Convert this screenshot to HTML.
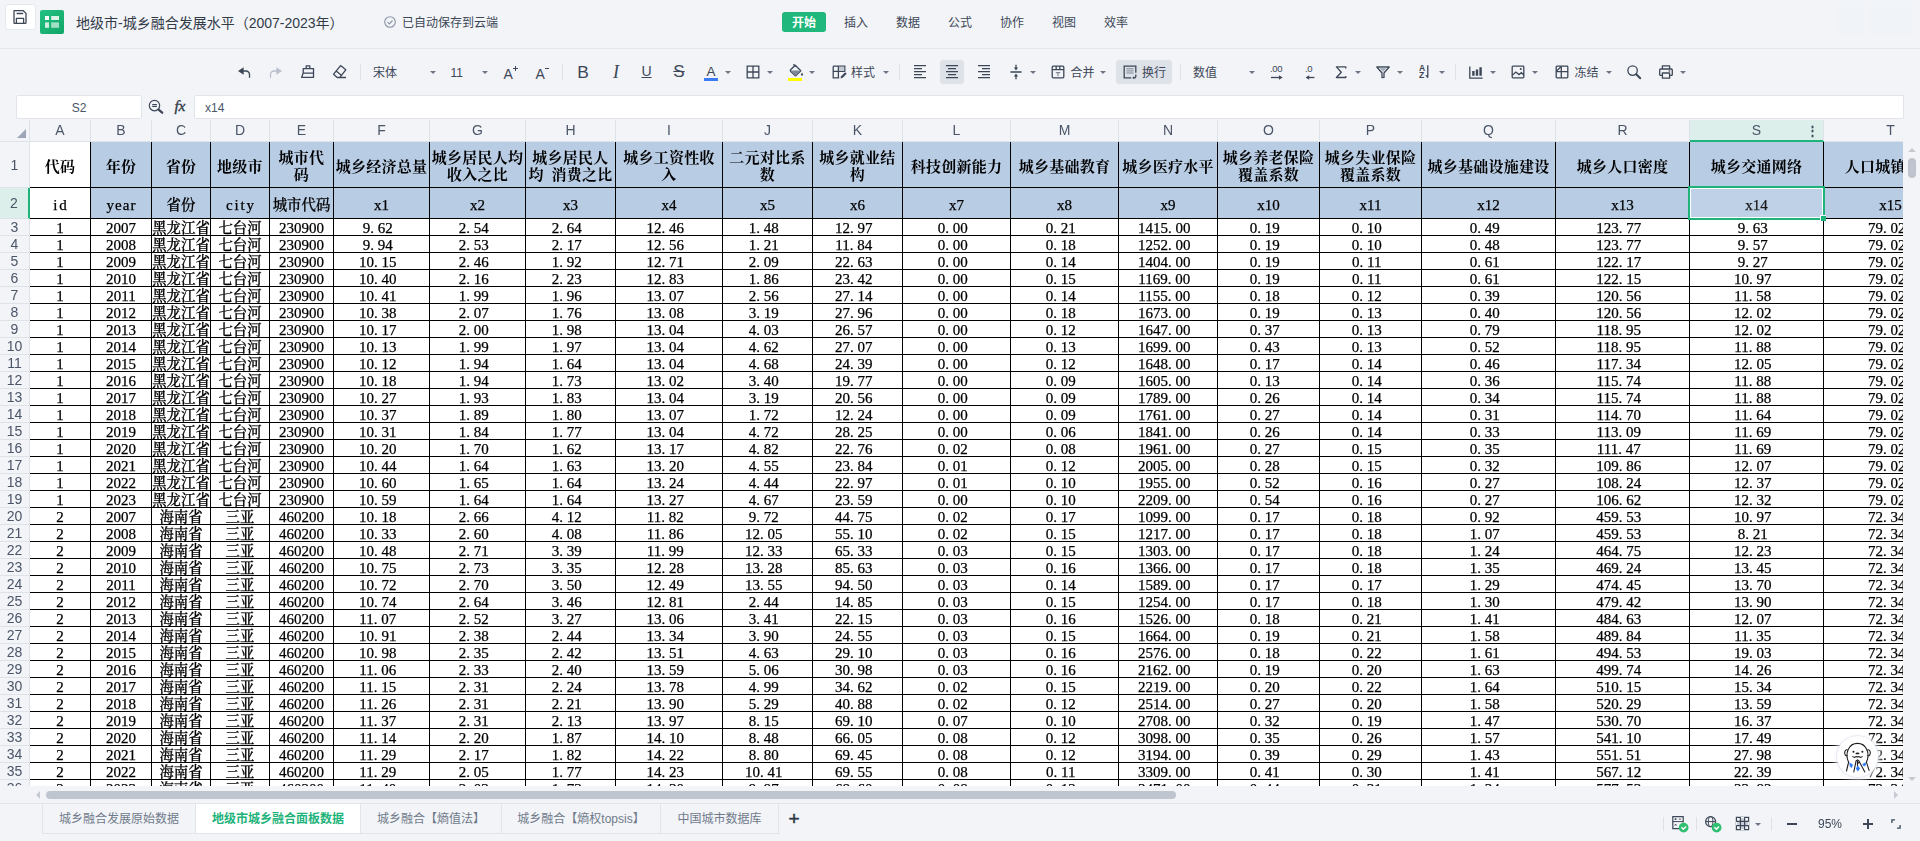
<!DOCTYPE html>
<html lang="zh-CN"><head><meta charset="utf-8"><title>地级市-城乡融合发展水平（2007-2023年）</title>
<style>
*{box-sizing:border-box;margin:0;padding:0}
html,body{width:1920px;height:841px;overflow:hidden;background:#f2f4f8}
body{position:relative;font-family:"Liberation Sans","Noto Sans CJK SC",sans-serif;font-size:13px;color:#3d4757}
#grid{will-change:transform;position:absolute;left:0;top:119px;width:1903px;height:667px;overflow:hidden;background:#fff}
.chr{display:flex;height:23px;width:2200px;background:#f2f4f8;border-bottom:1px solid #dde1e8;border-top:1px solid #f2f4f8}
.corner{width:30px;height:21px;border-right:1px solid #dde1e8;position:relative;flex:none}
.corner i{position:absolute;left:17px;top:9px;width:0;height:0;border-left:9px solid transparent;border-bottom:9px solid #9aa5b5}
.ch{flex:none;height:21px;border-right:1px solid #dde1e8;text-align:center;line-height:21px;font-size:14px;color:#4a5567;position:relative}
.ch.sel{background:#dcefea;box-shadow:0 1px 0 #1db37a,inset 0 -1px 0 #1db37a}
.ch b{position:absolute;right:4.5px;top:.5px;font-weight:bold;font-size:12.5px;color:#3d4757}
.r{display:flex;width:2200px}
.rh{flex:none;width:30px;border-right:1px solid #dde1e8;border-bottom:1px solid #dde1e8;background:#f2f4f8;text-align:center;font-size:14px;color:#4a5567;display:flex;align-items:center;justify-content:center}
.rh.sel{background:#dcefea;border-right:2px solid #1db37a}
.c{flex:none;border-right:1px solid #000;border-bottom:1px solid #000;font-family:"Liberation Serif","Noto Serif CJK SC",serif;font-size:15px;color:#000;text-align:center;white-space:nowrap;overflow:hidden;line-height:18px;height:100%}
.c i{font-style:normal;letter-spacing:3.75px}
.c.hb,.c.h2{background:#b8cce4;display:flex;align-items:center;justify-content:center}
.c.hb{font-weight:bold;line-height:17px;padding:5px 2px 0;word-spacing:3.75px;letter-spacing:.25px;-webkit-text-stroke:0}
.c.w{background:#fff}
.c.h2{align-items:flex-end;padding-bottom:4px}
.c.n{padding-right:7.5px}
.c.k{font-size:14.4px;font-weight:500}
.c{-webkit-text-stroke:.25px #000}
.ls1 span{letter-spacing:1px;margin-right:-1px}.ls2 span{letter-spacing:1.8px;margin-right:-1.8px}
.selbox{position:absolute;left:1688px;top:67px;width:137px;height:34px;border:2px solid #1db37a;box-shadow:inset 0 0 0 1px #fff;background:rgba(255,255,255,.1)}
.selbox i{position:absolute;right:-3px;bottom:-3px;width:6px;height:6px;background:#1db37a;border-left:1px solid #fff;border-top:1px solid #fff}
#title{position:absolute;left:0;top:0;width:1920px;height:49px;border-bottom:1px solid #e4e7ed}
.savebtn{position:absolute;left:5px;top:4px;width:31px;height:26px;background:#fff;border:1px solid #e6e9ee;border-radius:3px}
.savebtn svg{position:absolute;left:6px;top:4px;width:16px;height:16px}
.appic{position:absolute;left:40px;top:10px;width:24px;height:24px;border-radius:2px;background:linear-gradient(135deg,#22c283,#11a566)}
.doct{position:absolute;left:76px;top:12px;font-size:14px;line-height:22px;color:#333b48;white-space:nowrap}
.saved{position:absolute;left:402px;top:12px;font-size:12px;line-height:22px;color:#3d4757;white-space:nowrap}
.menu b{position:absolute;left:782px;top:12px;width:44px;height:20px;border-radius:3px;background:#1fb77b;color:#fff;font-size:12px;line-height:22px;text-align:center;font-weight:bold}
.menu span{position:absolute;top:12px;font-size:12px;line-height:22px;color:#3d4757;white-space:nowrap}
.ic{position:absolute;width:16px;height:16px;overflow:visible}
.cr{position:absolute;width:0;height:0;border-left:3px solid transparent;border-right:3px solid transparent;border-top:3.2px solid #6d7686}
.sp{position:absolute;width:1px;background:#dde1e8}
.t{position:absolute;font-size:12px;line-height:20px;color:#3d4757;white-space:nowrap}
.big{position:absolute;font-size:15.5px;line-height:20px;color:#3d4757;white-space:nowrap}
.big sup{font-size:9px;position:relative;top:-3px;left:-1.5px;vertical-align:top;line-height:10px}
.bar{position:absolute;top:78px;width:14px;height:3px}
.act{position:absolute;background:#dde1e8;border-radius:3px}
.dec{position:absolute;top:63px;font-size:9.5px;line-height:12px;color:#3d4757;letter-spacing:-.3px}
.az{position:absolute;font-size:8.5px;line-height:9px;color:#3d4757;font-weight:bold}
#fb .nm{position:absolute;left:16px;top:95px;width:126px;height:24px;background:#fff;border:1px solid #e1e5eb;border-radius:2px;text-align:center;font-size:12px;line-height:24.5px;color:#4a5567}
#fb .fx{position:absolute;left:174.5px;top:95.5px;font-family:"Liberation Serif",serif;font-style:italic;font-weight:normal;-webkit-text-stroke:.35px #2f3846;font-size:15.5px;line-height:20px;color:#2f3846;letter-spacing:-.3px}
#fb .fx small{font-size:10px;font-weight:normal}
#fb .fi{position:absolute;left:194px;top:95px;width:1710px;height:24px;background:#fff;border:1px solid #e1e5eb;border-radius:2px 0 0 2px;font-size:12px;line-height:24.5px;color:#4a5567;padding-left:10px}
#vs{position:absolute;left:1903px;top:141px;width:17px;height:645px;background:#f2f4f8}
#vs .up{position:absolute;left:5px;top:7px;border-left:4px solid transparent;border-right:4px solid transparent;border-bottom:4px solid #c5cad3}
#vs .dn{position:absolute;left:5px;top:636px;border-left:4px solid transparent;border-right:4px solid transparent;border-top:4px solid #c5cad3}
#vs .th{position:absolute;left:5px;top:17px;width:8px;height:20px;border-radius:4px;background:#bfc5cf}
#hs{position:absolute;left:0;top:786px;width:1920px;height:17px;background:#f2f4f8}
#hs .lf{position:absolute;left:36px;top:5px;border-top:4px solid transparent;border-bottom:4px solid transparent;border-right:4px solid #c5cad3}
#hs .rt{position:absolute;left:1894px;top:5px;border-top:4px solid transparent;border-bottom:4px solid transparent;border-left:4px solid #c5cad3}
#hs .th{position:absolute;left:46px;top:5px;width:1130px;height:8px;border-radius:4px;background:#bfc5cf}
#mascot{position:absolute;left:1836.5px;top:736.3px;width:41px;height:41px;border-radius:50%;box-shadow:0 0 0 1px rgba(205,213,232,.45),0 0 6px 2px rgba(255,255,255,.9),0 1px 4px rgba(90,100,130,.2);background:#fff}
#tabs{position:absolute;left:0;top:803px;width:1920px;height:38px;border-top:1px solid #e1e5eb;background:#f2f4f8}
#tabs .tw{position:absolute;left:42px;top:0;height:30px;display:flex;border-left:1px solid #e1e5eb;border-bottom:1px solid #e1e5eb}
#tabs .tw span{flex:none;height:29px;border-right:1px solid #e1e5eb;text-align:center;font-size:12px;line-height:31px;color:#707a8a;white-space:nowrap}
#tabs .tw span.on{background:#fff;color:#1db37a;font-weight:bold}
#tabs .plus{position:absolute;left:788.5px;top:5px;font-size:19px;line-height:20px;font-weight:normal;color:#2f3846;-webkit-text-stroke:.5px #2f3846}
.mn{position:absolute;width:10px;height:2px;background:#3d4757}
.mn.v{width:2px;height:10px}
.zm{position:absolute;left:1818px;top:814px;font-size:12px;line-height:21.5px;color:#3d4757}
.ph{position:absolute;top:1px;height:34px;background:#f0f3f7}

</style></head><body>
<div id="title">
<div class="savebtn"><svg viewBox="0 0 16 16" width="16" height="16"><path d="M2 1.7h9.3l2.7 2.7v9.3a.7.7 0 0 1-.7.7H2.7a.7.7 0 0 1-.7-.7V2.4a.7.7 0 0 1 .7-.7z M4.6 4.5h6.6 M4.4 14.2V9.4h7.2v4.8" fill="none" stroke="#3d4757" stroke-width="1.3" stroke-linejoin="round"/></svg></div>
<div class="appic"><svg viewBox="0 0 24 24" width="24" height="24"><rect x="5" y="6" width="4" height="4" fill="#fff"/><rect x="11.2" y="6" width="7.8" height="4" fill="#fff" fill-opacity=".85"/><rect x="5" y="12.4" width="4" height="5.4" fill="#fff" fill-opacity=".8"/><rect x="11.2" y="12.4" width="7.8" height="5.4" fill="#fff" fill-opacity=".6"/></svg></div>
<div class="doct">地级市-城乡融合发展水平（2007-2023年）</div>
<svg class="ic" style="left:382.500px;top:15px;width:14px;height:14px" viewBox="0 0 14 14"><circle cx="7" cy="7" r="5.3" fill="none" stroke="#8b94a5" stroke-width="1.1"/><path d="M4.6 7.2l1.7 1.7 3.2-3.4" fill="none" stroke="#8b94a5" stroke-width="1.1"/></svg>
<div class="saved">已自动保存到云端</div>
<div class="menu"><b>开始</b>
<span style="left:844px">插入</span>
<span style="left:896px">数据</span>
<span style="left:948px">公式</span>
<span style="left:1000px">协作</span>
<span style="left:1052px">视图</span>
<span style="left:1104px">效率</span>
</div><i class="ph" style="left:1838px;width:26px"></i><i class="ph" style="left:1870px;width:42px"></i></div>
<div id="tb">
<svg class="ic" style="left:236px;top:64px" viewBox="0 0 16 16" ><path d="M2 7L7.6 3.2V10.8Z" fill="#3d4757"/><path d="M7 7H10a3.5 3.5 0 0 1 3.5 3.5V13.7" fill="none" stroke="#3d4757" stroke-width="1.3"/></svg>
<svg class="ic" style="left:268px;top:64px" viewBox="0 0 16 16" ><path d="M14 7L8.4 3.2V10.8Z" fill="#b9c0cb"/><path d="M9 7H6a3.5 3.5 0 0 0-3.5 3.5V13.7" fill="none" stroke="#b9c0cb" stroke-width="1.3"/></svg>
<svg class="ic" style="left:300px;top:64px" viewBox="0 0 16 16" ><path d="M6.2 4.6V1.9h3.6v2.7 M3.2 4.6h10.3v4.5H3.2z M3.2 9.1L1.6 13.4H13.5V9.1" fill="none" stroke="#3d4757" stroke-width="1.3" stroke-linejoin="round"/></svg>
<svg class="ic" style="left:332px;top:64px" viewBox="0 0 16 16" ><path d="M8.6 1.6l5.2 4.2-6 7.6H5.2L1.6 10.2z M4.4 7.2l5.6 4.6 M5 13.5h9" fill="none" stroke="#3d4757" stroke-width="1.3" stroke-linejoin="round"/></svg>
<i class="sp" style="left:360px;top:64px;height:16px"></i>
<span class="t" style="left:373px;top:62.8px">宋体</span>
<i class="cr" style="left:429.5px;top:71px"></i>
<span class="t" style="left:450.5px;top:62.8px">11</span>
<i class="cr" style="left:482px;top:71px"></i>
<span class="big" style="left:503.5px;top:63.5px;font-size:14px">A</span><i class="mn" style="left:512.5px;top:68px;width:5px;height:1px"></i><i class="mn" style="left:514.5px;top:66px;width:1px;height:5px"></i>
<span class="big" style="left:535.5px;top:63.5px;font-size:14px">A</span><i class="mn" style="left:545px;top:68px;width:4px;height:1px"></i>
<i class="sp" style="left:562px;top:64px;height:16px"></i>
<span class="big" style="left:577.3px;top:61.9px;font-size:17.4px">B</span>
<span class="big" style="left:613px;top:61.8px;font-style:italic;font-family:'Liberation Serif',serif;font-size:18px">I</span>
<span class="big" style="left:641.5px;top:61px;font-size:14px"><u>U</u></span>
<span class="big" style="left:673.3px;top:62px;font-size:17px"><s>S</s></span>
<span class="big" style="left:706.5px;top:61.5px;font-size:13.5px">A</span><i class="bar" style="left:704px;background:#3b7cf5"></i>
<i class="cr" style="left:725px;top:71px"></i>
<svg class="ic" style="left:744.5px;top:63.5px" viewBox="0 0 16 16" ><path d="M2.2 2.2h11.6v11.6H2.2z M8 2.2v11.6 M2.2 8h11.6" fill="none" stroke="#3d4757" stroke-width="1.3"/></svg>
<i class="cr" style="left:767px;top:71px"></i>
<svg class="ic" style="left:787.5px;top:62.5px" viewBox="0 0 16 16" ><path d="M7.2 2.2l5.6 5.6-4.6 4.6a1 1 0 0 1-1.4 0L2.6 8.2a1 1 0 0 1 0-1.4z" fill="none" stroke="#3d4757" stroke-width="1.3" stroke-linejoin="round"/><path d="M2.4 7.6h10.4l-5.3 5.1z" fill="#7d8797"/><path d="M5.4 1.2l2.4 2.4" fill="none" stroke="#3d4757" stroke-width="1.3"/><path d="M14 9.6l1.1 2a1.1 1.1 0 1 1-2.2 0z" fill="#3d4757"/></svg>
<i class="bar" style="left:788px;background:#ffff00"></i>
<i class="cr" style="left:809px;top:71px"></i>
<svg class="ic" style="left:831px;top:63.5px" viewBox="0 0 16 16" ><path d="M2.2 2.2h11.6v5.6 M2.2 2.2v11.6h6 M2.2 7.4h11.6 M7.4 2.2v11.6" fill="none" stroke="#3d4757" stroke-width="1.3"/><rect x="8" y="2.8" width="5.2" height="4" fill="#c5cbd5"/><path d="M9.6 14.4l.5-2.2 4-4 1.6 1.6-4 4z" fill="#3d4757"/></svg>
<span class="t" style="left:851px;top:62.8px">样式</span>
<i class="cr" style="left:883px;top:71px"></i>
<i class="sp" style="left:899px;top:64px;height:16px"></i>
<svg class="ic" style="left:912px;top:63.5px" viewBox="0 0 16 16" ><path d="M2 1.6H14 M2 4.6H10 M2 7.6H14 M2 10.6H10 M2 13.6H14 " fill="none" stroke="#3d4757" stroke-width="1.3"/></svg>
<i class="act" style="left:940px;top:60px;width:24px;height:24px"></i>
<svg class="ic" style="left:944px;top:63.5px" viewBox="0 0 16 16" ><path d="M2 1.6H14 M4 4.6H12 M2 7.6H14 M4 10.6H12 M2 13.6H14 " fill="none" stroke="#3d4757" stroke-width="1.3"/></svg>
<svg class="ic" style="left:976px;top:63.5px" viewBox="0 0 16 16" ><path d="M2 1.6H14 M6 4.6H14 M2 7.6H14 M6 10.6H14 M2 13.6H14 " fill="none" stroke="#3d4757" stroke-width="1.3"/></svg>
<svg class="ic" style="left:1007.5px;top:63.5px" viewBox="0 0 16 16" ><path d="M2.4 8h11.2 M8 .8v3.4 M8 15.2v-3.4" fill="none" stroke="#3d4757" stroke-width="1.3"/><path d="M8 6.4L5.9 3.4h4.2z M8 9.6l-2.1 3h4.2z" fill="#3d4757"/></svg>
<i class="cr" style="left:1030px;top:71px"></i>
<svg class="ic" style="left:1049.5px;top:63.5px" viewBox="0 0 16 16" ><rect x="2.2" y="2.2" width="11.6" height="11.6" rx="1" fill="none" stroke="#3d4757" stroke-width="1.3"/><path d="M2.2 5.6h11.6 M6.2 2.2v3.4 M9.8 2.2v3.4" fill="none" stroke="#3d4757" stroke-width="1.3"/><path d="M5.8 8.6h4.4 M8 8.6v3.6" fill="none" stroke="#7d8797" stroke-width="1.1"/></svg>
<span class="t" style="left:1070.5px;top:62.8px">合并</span>
<i class="cr" style="left:1100px;top:71px"></i>
<i class="act" style="left:1116px;top:60px;width:56px;height:24px"></i>
<svg class="ic" style="left:1122px;top:63.5px" viewBox="0 0 16 16" ><path d="M9.2 13.8H2.2V2.2h11.6v6.6" fill="none" stroke="#3d4757" stroke-width="1.3"/><path d="M4.4 4.8h7.2 M4.4 6.9h7.2 M4.4 9h7.2" fill="none" stroke="#7d8797" stroke-width="1"/><path d="M13.8 10.4v2.2a1.2 1.2 0 0 1-1.2 1.2h-.8" fill="none" stroke="#3d4757" stroke-width="1.3"/><path d="M10.2 13.8l2-1.5v3z" fill="#3d4757"/></svg>
<span class="t" style="left:1142px;top:62.8px">换行</span>
<i class="sp" style="left:1180px;top:64px;height:16px"></i>
<span class="t" style="left:1193px;top:62.8px">数值</span>
<i class="cr" style="left:1249px;top:71px"></i>
<span class="dec" style="left:1270px">.00</span><svg class="ic" style="left:1270px;top:74px;width:14px;height:6px" viewBox="0 0 14 6"><path d="M1 3.5h9" fill="none" stroke="#3d4757" stroke-width="1.3"/><path d="M12.6 3.5L9 1.3v4.4z" fill="#3d4757"/></svg>
<span class="dec" style="left:1305px">.0</span><svg class="ic" style="left:1304px;top:74px;width:12px;height:6px" viewBox="0 0 12 6"><path d="M4 3.5h6.4" fill="none" stroke="#3d4757" stroke-width="1.3"/><path d="M1.6 3.5L5.2 1.3v4.4z" fill="#3d4757"/></svg>
<svg class="ic" style="left:1333px;top:64px" viewBox="0 0 16 16" ><path d="M12.8 4.4V2.9H3.4L8.3 8.2 3.4 13.5h9.4V12" fill="none" stroke="#3d4757" stroke-width="1.3" stroke-linejoin="round"/></svg>
<i class="cr" style="left:1355px;top:71px"></i>
<svg class="ic" style="left:1375px;top:64px" viewBox="0 0 16 16" ><path d="M1.8 3h12.4L9 9v4.4l-2 .2V9z" fill="none" stroke="#3d4757" stroke-width="1.3" stroke-linejoin="round"/><path d="M4.4 3.8h7.2L8.6 7.6H7.4z" fill="#aab2be"/></svg>
<i class="cr" style="left:1397px;top:71px"></i>
<span class="az" style="left:1419px;top:63.5px">A</span><span class="az" style="left:1419px;top:71px">Z</span>
<svg class="ic" style="left:1418px;top:64px" viewBox="0 0 16 16" ><path d="M9.8 1.2v12.2" fill="none" stroke="#3d4757" stroke-width="1.3"/><path d="M9.8 14.6l-2.6-3.4h2.6z" fill="#3d4757"/></svg>
<i class="cr" style="left:1439px;top:71px"></i>
<i class="sp" style="left:1455px;top:64px;height:16px"></i>
<svg class="ic" style="left:1468px;top:64px" viewBox="0 0 16 16" ><path d="M1.8 2.4v11.8h12.8" fill="none" stroke="#3d4757" stroke-width="1.3"/><path d="M5.4 11.8V7 M9 11.8V5.4 M12.6 11.8V3.2" fill="none" stroke="#3d4757" stroke-width="2.4"/></svg>
<i class="cr" style="left:1490px;top:71px"></i>
<svg class="ic" style="left:1510px;top:63.5px" viewBox="0 0 16 16" ><rect x="2.2" y="2.2" width="11.6" height="11.6" rx=".8" fill="none" stroke="#3d4757" stroke-width="1.3"/><path d="M2.2 11.4l3.6-3.4 3.2 2.6 2.4-1.9 2.4 2.2" fill="none" stroke="#3d4757" stroke-width="1.3"/><circle cx="10.8" cy="5" r="1" fill="#3d4757"/></svg>
<i class="cr" style="left:1532px;top:71px"></i>
<svg class="ic" style="left:1553.5px;top:63.5px" viewBox="0 0 16 16" ><rect x="2.2" y="2.2" width="11.6" height="11.6" rx=".8" fill="none" stroke="#3d4757" stroke-width="1.3"/><path d="M7.3 2.2v11.6 M2.2 7.6h11.6 M2.4 7.2L7 2.6" fill="none" stroke="#3d4757" stroke-width="1.3"/></svg>
<span class="t" style="left:1574.5px;top:62.8px">冻结</span>
<i class="cr" style="left:1606px;top:71px"></i>
<svg class="ic" style="left:1625.5px;top:63.5px" viewBox="0 0 16 16" ><circle cx="6.6" cy="6.6" r="4.7" fill="none" stroke="#3d4757" stroke-width="1.3"/><path d="M10.2 10.2l4 4" fill="none" stroke="#3d4757" stroke-width="2" stroke-linecap="round"/></svg>
<svg class="ic" style="left:1658px;top:63.5px" viewBox="0 0 16 16" ><path d="M4.4 5V1.8h7.2V5 M4.4 11.4H2.6a.9.9 0 0 1-.9-.9V5.9a.9.9 0 0 1 .9-.9h10.8a.9.9 0 0 1 .9.9v4.6a.9.9 0 0 1-.9.9h-1.8 M4.4 9h7.2v5.2H4.4z" fill="none" stroke="#3d4757" stroke-width="1.3" stroke-linejoin="round"/><path d="M10.6 7h1.6" fill="none" stroke="#3d4757" stroke-width="1.3"/></svg>
<i class="cr" style="left:1680px;top:71px"></i>
</div>
<div id="fb"><div class="nm">S2</div>
<svg class="ic" style="left:147px;top:98px;width:17px;height:17px" viewBox="0 0 17 17"><circle cx="7.5" cy="7.6" r="5.2" fill="none" stroke="#3d4757" stroke-width="1.2"/><path d="M5.2 6.5h4.7 M5.2 8.4h4.7" stroke="#3d4757" stroke-width="1.1"/><path d="M11.6 11.700l3.600 3" stroke="#3d4757" stroke-width="2.300" stroke-linecap="round"/></svg>
<span class="fx">fx</span>
<div class="fi">x14</div></div>
<div id="grid">
<div class="chr"><div class="corner"><i></i></div>
<div class="ch" style="width:61px">A</div>
<div class="ch" style="width:61px">B</div>
<div class="ch" style="width:59px">C</div>
<div class="ch" style="width:59px">D</div>
<div class="ch" style="width:64px">E</div>
<div class="ch" style="width:96px">F</div>
<div class="ch" style="width:96px">G</div>
<div class="ch" style="width:90px">H</div>
<div class="ch" style="width:107px">I</div>
<div class="ch" style="width:90px">J</div>
<div class="ch" style="width:90px">K</div>
<div class="ch" style="width:108px">L</div>
<div class="ch" style="width:108px">M</div>
<div class="ch" style="width:99px">N</div>
<div class="ch" style="width:102px">O</div>
<div class="ch" style="width:102px">P</div>
<div class="ch" style="width:134px">Q</div>
<div class="ch" style="width:134px">R</div>
<div class="ch sel" style="width:134px">S<b>⋮</b></div>
<div class="ch" style="width:134px">T</div>
</div>
<div class="r r1" style="height:46px"><div class="rh">1</div><div class="c hb w" style="width:61px"><span>代码</span></div><div class="c hb" style="width:61px"><span>年份</span></div><div class="c hb" style="width:59px"><span>省份</span></div><div class="c hb" style="width:59px"><span>地级市</span></div><div class="c hb" style="width:64px"><span>城市代<br>码</span></div><div class="c hb" style="width:96px"><span>城乡经济总量</span></div><div class="c hb" style="width:96px"><span>城乡居民人均<br>收入之比</span></div><div class="c hb" style="width:90px"><span>城乡居民人<br>均 消费之比</span></div><div class="c hb" style="width:107px"><span>城乡工资性收<br>入</span></div><div class="c hb" style="width:90px"><span>二元对比系<br>数</span></div><div class="c hb" style="width:90px"><span>城乡就业结<br>构</span></div><div class="c hb" style="width:108px"><span>科技创新能力</span></div><div class="c hb" style="width:108px"><span>城乡基础教育</span></div><div class="c hb" style="width:99px"><span>城乡医疗水平</span></div><div class="c hb" style="width:102px"><span>城乡养老保险<br>覆盖系数</span></div><div class="c hb" style="width:102px"><span>城乡失业保险<br>覆盖系数</span></div><div class="c hb" style="width:134px"><span>城乡基础设施建设</span></div><div class="c hb" style="width:134px"><span>城乡人口密度</span></div><div class="c hb" style="width:134px"><span>城乡交通网络</span></div><div class="c hb" style="width:134px"><span>人口城镇化率</span></div></div>
<div class="r r2" style="height:31px"><div class="rh sel">2</div><div class="c h2 w ls2" style="width:61px"><span>id</span></div><div class="c h2 ls1" style="width:61px"><span>year</span></div><div class="c h2 k" style="width:59px"><span>省份</span></div><div class="c h2 ls2" style="width:59px"><span>city</span></div><div class="c h2 k" style="width:64px"><span>城市代码</span></div><div class="c h2" style="width:96px"><span>x1</span></div><div class="c h2" style="width:96px"><span>x2</span></div><div class="c h2" style="width:90px"><span>x3</span></div><div class="c h2" style="width:107px"><span>x4</span></div><div class="c h2" style="width:90px"><span>x5</span></div><div class="c h2" style="width:90px"><span>x6</span></div><div class="c h2" style="width:108px"><span>x7</span></div><div class="c h2" style="width:108px"><span>x8</span></div><div class="c h2" style="width:99px"><span>x9</span></div><div class="c h2" style="width:102px"><span>x10</span></div><div class="c h2" style="width:102px"><span>x11</span></div><div class="c h2" style="width:134px"><span>x12</span></div><div class="c h2" style="width:134px"><span>x13</span></div><div class="c h2" style="width:134px"><span>x14</span></div><div class="c h2" style="width:134px"><span>x15</span></div></div>
<div class="r " style="height:17px"><div class="rh">3</div><div class="c" style="width:61px">1</div><div class="c" style="width:61px">2007</div><div class="c k" style="width:59px">黑龙江省</div><div class="c k" style="width:59px">七台河</div><div class="c" style="width:64px">230900</div><div class="c n" style="width:96px">9<i>.</i>62</div><div class="c n" style="width:96px">2<i>.</i>54</div><div class="c n" style="width:90px">2<i>.</i>64</div><div class="c n" style="width:107px">12<i>.</i>46</div><div class="c n" style="width:90px">1<i>.</i>48</div><div class="c n" style="width:90px">12<i>.</i>97</div><div class="c n" style="width:108px">0<i>.</i>00</div><div class="c n" style="width:108px">0<i>.</i>21</div><div class="c n" style="width:99px">1415<i>.</i>00</div><div class="c n" style="width:102px">0<i>.</i>19</div><div class="c n" style="width:102px">0<i>.</i>10</div><div class="c n" style="width:134px">0<i>.</i>49</div><div class="c n" style="width:134px">123<i>.</i>77</div><div class="c n" style="width:134px">9<i>.</i>63</div><div class="c n" style="width:134px">79<i>.</i>02</div></div>
<div class="r " style="height:17px"><div class="rh">4</div><div class="c" style="width:61px">1</div><div class="c" style="width:61px">2008</div><div class="c k" style="width:59px">黑龙江省</div><div class="c k" style="width:59px">七台河</div><div class="c" style="width:64px">230900</div><div class="c n" style="width:96px">9<i>.</i>94</div><div class="c n" style="width:96px">2<i>.</i>53</div><div class="c n" style="width:90px">2<i>.</i>17</div><div class="c n" style="width:107px">12<i>.</i>56</div><div class="c n" style="width:90px">1<i>.</i>21</div><div class="c n" style="width:90px">11<i>.</i>84</div><div class="c n" style="width:108px">0<i>.</i>00</div><div class="c n" style="width:108px">0<i>.</i>18</div><div class="c n" style="width:99px">1252<i>.</i>00</div><div class="c n" style="width:102px">0<i>.</i>19</div><div class="c n" style="width:102px">0<i>.</i>10</div><div class="c n" style="width:134px">0<i>.</i>48</div><div class="c n" style="width:134px">123<i>.</i>77</div><div class="c n" style="width:134px">9<i>.</i>57</div><div class="c n" style="width:134px">79<i>.</i>02</div></div>
<div class="r " style="height:17px"><div class="rh">5</div><div class="c" style="width:61px">1</div><div class="c" style="width:61px">2009</div><div class="c k" style="width:59px">黑龙江省</div><div class="c k" style="width:59px">七台河</div><div class="c" style="width:64px">230900</div><div class="c n" style="width:96px">10<i>.</i>15</div><div class="c n" style="width:96px">2<i>.</i>46</div><div class="c n" style="width:90px">1<i>.</i>92</div><div class="c n" style="width:107px">12<i>.</i>71</div><div class="c n" style="width:90px">2<i>.</i>09</div><div class="c n" style="width:90px">22<i>.</i>63</div><div class="c n" style="width:108px">0<i>.</i>00</div><div class="c n" style="width:108px">0<i>.</i>14</div><div class="c n" style="width:99px">1404<i>.</i>00</div><div class="c n" style="width:102px">0<i>.</i>19</div><div class="c n" style="width:102px">0<i>.</i>11</div><div class="c n" style="width:134px">0<i>.</i>61</div><div class="c n" style="width:134px">122<i>.</i>17</div><div class="c n" style="width:134px">9<i>.</i>27</div><div class="c n" style="width:134px">79<i>.</i>02</div></div>
<div class="r " style="height:17px"><div class="rh">6</div><div class="c" style="width:61px">1</div><div class="c" style="width:61px">2010</div><div class="c k" style="width:59px">黑龙江省</div><div class="c k" style="width:59px">七台河</div><div class="c" style="width:64px">230900</div><div class="c n" style="width:96px">10<i>.</i>40</div><div class="c n" style="width:96px">2<i>.</i>16</div><div class="c n" style="width:90px">2<i>.</i>23</div><div class="c n" style="width:107px">12<i>.</i>83</div><div class="c n" style="width:90px">1<i>.</i>86</div><div class="c n" style="width:90px">23<i>.</i>42</div><div class="c n" style="width:108px">0<i>.</i>00</div><div class="c n" style="width:108px">0<i>.</i>15</div><div class="c n" style="width:99px">1169<i>.</i>00</div><div class="c n" style="width:102px">0<i>.</i>19</div><div class="c n" style="width:102px">0<i>.</i>11</div><div class="c n" style="width:134px">0<i>.</i>61</div><div class="c n" style="width:134px">122<i>.</i>15</div><div class="c n" style="width:134px">10<i>.</i>97</div><div class="c n" style="width:134px">79<i>.</i>02</div></div>
<div class="r " style="height:17px"><div class="rh">7</div><div class="c" style="width:61px">1</div><div class="c" style="width:61px">2011</div><div class="c k" style="width:59px">黑龙江省</div><div class="c k" style="width:59px">七台河</div><div class="c" style="width:64px">230900</div><div class="c n" style="width:96px">10<i>.</i>41</div><div class="c n" style="width:96px">1<i>.</i>99</div><div class="c n" style="width:90px">1<i>.</i>96</div><div class="c n" style="width:107px">13<i>.</i>07</div><div class="c n" style="width:90px">2<i>.</i>56</div><div class="c n" style="width:90px">27<i>.</i>14</div><div class="c n" style="width:108px">0<i>.</i>00</div><div class="c n" style="width:108px">0<i>.</i>14</div><div class="c n" style="width:99px">1155<i>.</i>00</div><div class="c n" style="width:102px">0<i>.</i>18</div><div class="c n" style="width:102px">0<i>.</i>12</div><div class="c n" style="width:134px">0<i>.</i>39</div><div class="c n" style="width:134px">120<i>.</i>56</div><div class="c n" style="width:134px">11<i>.</i>58</div><div class="c n" style="width:134px">79<i>.</i>02</div></div>
<div class="r " style="height:17px"><div class="rh">8</div><div class="c" style="width:61px">1</div><div class="c" style="width:61px">2012</div><div class="c k" style="width:59px">黑龙江省</div><div class="c k" style="width:59px">七台河</div><div class="c" style="width:64px">230900</div><div class="c n" style="width:96px">10<i>.</i>38</div><div class="c n" style="width:96px">2<i>.</i>07</div><div class="c n" style="width:90px">1<i>.</i>76</div><div class="c n" style="width:107px">13<i>.</i>08</div><div class="c n" style="width:90px">3<i>.</i>19</div><div class="c n" style="width:90px">27<i>.</i>96</div><div class="c n" style="width:108px">0<i>.</i>00</div><div class="c n" style="width:108px">0<i>.</i>18</div><div class="c n" style="width:99px">1673<i>.</i>00</div><div class="c n" style="width:102px">0<i>.</i>19</div><div class="c n" style="width:102px">0<i>.</i>13</div><div class="c n" style="width:134px">0<i>.</i>40</div><div class="c n" style="width:134px">120<i>.</i>56</div><div class="c n" style="width:134px">12<i>.</i>02</div><div class="c n" style="width:134px">79<i>.</i>02</div></div>
<div class="r " style="height:17px"><div class="rh">9</div><div class="c" style="width:61px">1</div><div class="c" style="width:61px">2013</div><div class="c k" style="width:59px">黑龙江省</div><div class="c k" style="width:59px">七台河</div><div class="c" style="width:64px">230900</div><div class="c n" style="width:96px">10<i>.</i>17</div><div class="c n" style="width:96px">2<i>.</i>00</div><div class="c n" style="width:90px">1<i>.</i>98</div><div class="c n" style="width:107px">13<i>.</i>04</div><div class="c n" style="width:90px">4<i>.</i>03</div><div class="c n" style="width:90px">26<i>.</i>57</div><div class="c n" style="width:108px">0<i>.</i>00</div><div class="c n" style="width:108px">0<i>.</i>12</div><div class="c n" style="width:99px">1647<i>.</i>00</div><div class="c n" style="width:102px">0<i>.</i>37</div><div class="c n" style="width:102px">0<i>.</i>13</div><div class="c n" style="width:134px">0<i>.</i>79</div><div class="c n" style="width:134px">118<i>.</i>95</div><div class="c n" style="width:134px">12<i>.</i>02</div><div class="c n" style="width:134px">79<i>.</i>02</div></div>
<div class="r " style="height:17px"><div class="rh">10</div><div class="c" style="width:61px">1</div><div class="c" style="width:61px">2014</div><div class="c k" style="width:59px">黑龙江省</div><div class="c k" style="width:59px">七台河</div><div class="c" style="width:64px">230900</div><div class="c n" style="width:96px">10<i>.</i>13</div><div class="c n" style="width:96px">1<i>.</i>99</div><div class="c n" style="width:90px">1<i>.</i>97</div><div class="c n" style="width:107px">13<i>.</i>04</div><div class="c n" style="width:90px">4<i>.</i>62</div><div class="c n" style="width:90px">27<i>.</i>07</div><div class="c n" style="width:108px">0<i>.</i>00</div><div class="c n" style="width:108px">0<i>.</i>13</div><div class="c n" style="width:99px">1699<i>.</i>00</div><div class="c n" style="width:102px">0<i>.</i>43</div><div class="c n" style="width:102px">0<i>.</i>13</div><div class="c n" style="width:134px">0<i>.</i>52</div><div class="c n" style="width:134px">118<i>.</i>95</div><div class="c n" style="width:134px">11<i>.</i>88</div><div class="c n" style="width:134px">79<i>.</i>02</div></div>
<div class="r " style="height:17px"><div class="rh">11</div><div class="c" style="width:61px">1</div><div class="c" style="width:61px">2015</div><div class="c k" style="width:59px">黑龙江省</div><div class="c k" style="width:59px">七台河</div><div class="c" style="width:64px">230900</div><div class="c n" style="width:96px">10<i>.</i>12</div><div class="c n" style="width:96px">1<i>.</i>94</div><div class="c n" style="width:90px">1<i>.</i>64</div><div class="c n" style="width:107px">13<i>.</i>04</div><div class="c n" style="width:90px">4<i>.</i>68</div><div class="c n" style="width:90px">24<i>.</i>39</div><div class="c n" style="width:108px">0<i>.</i>00</div><div class="c n" style="width:108px">0<i>.</i>12</div><div class="c n" style="width:99px">1648<i>.</i>00</div><div class="c n" style="width:102px">0<i>.</i>17</div><div class="c n" style="width:102px">0<i>.</i>14</div><div class="c n" style="width:134px">0<i>.</i>46</div><div class="c n" style="width:134px">117<i>.</i>34</div><div class="c n" style="width:134px">12<i>.</i>05</div><div class="c n" style="width:134px">79<i>.</i>02</div></div>
<div class="r " style="height:17px"><div class="rh">12</div><div class="c" style="width:61px">1</div><div class="c" style="width:61px">2016</div><div class="c k" style="width:59px">黑龙江省</div><div class="c k" style="width:59px">七台河</div><div class="c" style="width:64px">230900</div><div class="c n" style="width:96px">10<i>.</i>18</div><div class="c n" style="width:96px">1<i>.</i>94</div><div class="c n" style="width:90px">1<i>.</i>73</div><div class="c n" style="width:107px">13<i>.</i>02</div><div class="c n" style="width:90px">3<i>.</i>40</div><div class="c n" style="width:90px">19<i>.</i>77</div><div class="c n" style="width:108px">0<i>.</i>00</div><div class="c n" style="width:108px">0<i>.</i>09</div><div class="c n" style="width:99px">1605<i>.</i>00</div><div class="c n" style="width:102px">0<i>.</i>13</div><div class="c n" style="width:102px">0<i>.</i>14</div><div class="c n" style="width:134px">0<i>.</i>36</div><div class="c n" style="width:134px">115<i>.</i>74</div><div class="c n" style="width:134px">11<i>.</i>88</div><div class="c n" style="width:134px">79<i>.</i>02</div></div>
<div class="r " style="height:17px"><div class="rh">13</div><div class="c" style="width:61px">1</div><div class="c" style="width:61px">2017</div><div class="c k" style="width:59px">黑龙江省</div><div class="c k" style="width:59px">七台河</div><div class="c" style="width:64px">230900</div><div class="c n" style="width:96px">10<i>.</i>27</div><div class="c n" style="width:96px">1<i>.</i>93</div><div class="c n" style="width:90px">1<i>.</i>83</div><div class="c n" style="width:107px">13<i>.</i>04</div><div class="c n" style="width:90px">3<i>.</i>19</div><div class="c n" style="width:90px">20<i>.</i>56</div><div class="c n" style="width:108px">0<i>.</i>00</div><div class="c n" style="width:108px">0<i>.</i>09</div><div class="c n" style="width:99px">1789<i>.</i>00</div><div class="c n" style="width:102px">0<i>.</i>26</div><div class="c n" style="width:102px">0<i>.</i>14</div><div class="c n" style="width:134px">0<i>.</i>34</div><div class="c n" style="width:134px">115<i>.</i>74</div><div class="c n" style="width:134px">11<i>.</i>88</div><div class="c n" style="width:134px">79<i>.</i>02</div></div>
<div class="r " style="height:17px"><div class="rh">14</div><div class="c" style="width:61px">1</div><div class="c" style="width:61px">2018</div><div class="c k" style="width:59px">黑龙江省</div><div class="c k" style="width:59px">七台河</div><div class="c" style="width:64px">230900</div><div class="c n" style="width:96px">10<i>.</i>37</div><div class="c n" style="width:96px">1<i>.</i>89</div><div class="c n" style="width:90px">1<i>.</i>80</div><div class="c n" style="width:107px">13<i>.</i>07</div><div class="c n" style="width:90px">1<i>.</i>72</div><div class="c n" style="width:90px">12<i>.</i>24</div><div class="c n" style="width:108px">0<i>.</i>00</div><div class="c n" style="width:108px">0<i>.</i>09</div><div class="c n" style="width:99px">1761<i>.</i>00</div><div class="c n" style="width:102px">0<i>.</i>27</div><div class="c n" style="width:102px">0<i>.</i>14</div><div class="c n" style="width:134px">0<i>.</i>31</div><div class="c n" style="width:134px">114<i>.</i>70</div><div class="c n" style="width:134px">11<i>.</i>64</div><div class="c n" style="width:134px">79<i>.</i>02</div></div>
<div class="r " style="height:17px"><div class="rh">15</div><div class="c" style="width:61px">1</div><div class="c" style="width:61px">2019</div><div class="c k" style="width:59px">黑龙江省</div><div class="c k" style="width:59px">七台河</div><div class="c" style="width:64px">230900</div><div class="c n" style="width:96px">10<i>.</i>31</div><div class="c n" style="width:96px">1<i>.</i>84</div><div class="c n" style="width:90px">1<i>.</i>77</div><div class="c n" style="width:107px">13<i>.</i>04</div><div class="c n" style="width:90px">4<i>.</i>72</div><div class="c n" style="width:90px">28<i>.</i>25</div><div class="c n" style="width:108px">0<i>.</i>00</div><div class="c n" style="width:108px">0<i>.</i>06</div><div class="c n" style="width:99px">1841<i>.</i>00</div><div class="c n" style="width:102px">0<i>.</i>26</div><div class="c n" style="width:102px">0<i>.</i>14</div><div class="c n" style="width:134px">0<i>.</i>33</div><div class="c n" style="width:134px">113<i>.</i>09</div><div class="c n" style="width:134px">11<i>.</i>69</div><div class="c n" style="width:134px">79<i>.</i>02</div></div>
<div class="r " style="height:17px"><div class="rh">16</div><div class="c" style="width:61px">1</div><div class="c" style="width:61px">2020</div><div class="c k" style="width:59px">黑龙江省</div><div class="c k" style="width:59px">七台河</div><div class="c" style="width:64px">230900</div><div class="c n" style="width:96px">10<i>.</i>20</div><div class="c n" style="width:96px">1<i>.</i>70</div><div class="c n" style="width:90px">1<i>.</i>62</div><div class="c n" style="width:107px">13<i>.</i>17</div><div class="c n" style="width:90px">4<i>.</i>82</div><div class="c n" style="width:90px">22<i>.</i>76</div><div class="c n" style="width:108px">0<i>.</i>02</div><div class="c n" style="width:108px">0<i>.</i>08</div><div class="c n" style="width:99px">1961<i>.</i>00</div><div class="c n" style="width:102px">0<i>.</i>27</div><div class="c n" style="width:102px">0<i>.</i>15</div><div class="c n" style="width:134px">0<i>.</i>35</div><div class="c n" style="width:134px">111<i>.</i>47</div><div class="c n" style="width:134px">11<i>.</i>69</div><div class="c n" style="width:134px">79<i>.</i>02</div></div>
<div class="r " style="height:17px"><div class="rh">17</div><div class="c" style="width:61px">1</div><div class="c" style="width:61px">2021</div><div class="c k" style="width:59px">黑龙江省</div><div class="c k" style="width:59px">七台河</div><div class="c" style="width:64px">230900</div><div class="c n" style="width:96px">10<i>.</i>44</div><div class="c n" style="width:96px">1<i>.</i>64</div><div class="c n" style="width:90px">1<i>.</i>63</div><div class="c n" style="width:107px">13<i>.</i>20</div><div class="c n" style="width:90px">4<i>.</i>55</div><div class="c n" style="width:90px">23<i>.</i>84</div><div class="c n" style="width:108px">0<i>.</i>01</div><div class="c n" style="width:108px">0<i>.</i>12</div><div class="c n" style="width:99px">2005<i>.</i>00</div><div class="c n" style="width:102px">0<i>.</i>28</div><div class="c n" style="width:102px">0<i>.</i>15</div><div class="c n" style="width:134px">0<i>.</i>32</div><div class="c n" style="width:134px">109<i>.</i>86</div><div class="c n" style="width:134px">12<i>.</i>07</div><div class="c n" style="width:134px">79<i>.</i>02</div></div>
<div class="r " style="height:17px"><div class="rh">18</div><div class="c" style="width:61px">1</div><div class="c" style="width:61px">2022</div><div class="c k" style="width:59px">黑龙江省</div><div class="c k" style="width:59px">七台河</div><div class="c" style="width:64px">230900</div><div class="c n" style="width:96px">10<i>.</i>60</div><div class="c n" style="width:96px">1<i>.</i>65</div><div class="c n" style="width:90px">1<i>.</i>64</div><div class="c n" style="width:107px">13<i>.</i>24</div><div class="c n" style="width:90px">4<i>.</i>44</div><div class="c n" style="width:90px">22<i>.</i>97</div><div class="c n" style="width:108px">0<i>.</i>01</div><div class="c n" style="width:108px">0<i>.</i>10</div><div class="c n" style="width:99px">1955<i>.</i>00</div><div class="c n" style="width:102px">0<i>.</i>52</div><div class="c n" style="width:102px">0<i>.</i>16</div><div class="c n" style="width:134px">0<i>.</i>27</div><div class="c n" style="width:134px">108<i>.</i>24</div><div class="c n" style="width:134px">12<i>.</i>37</div><div class="c n" style="width:134px">79<i>.</i>02</div></div>
<div class="r " style="height:17px"><div class="rh">19</div><div class="c" style="width:61px">1</div><div class="c" style="width:61px">2023</div><div class="c k" style="width:59px">黑龙江省</div><div class="c k" style="width:59px">七台河</div><div class="c" style="width:64px">230900</div><div class="c n" style="width:96px">10<i>.</i>59</div><div class="c n" style="width:96px">1<i>.</i>64</div><div class="c n" style="width:90px">1<i>.</i>64</div><div class="c n" style="width:107px">13<i>.</i>27</div><div class="c n" style="width:90px">4<i>.</i>67</div><div class="c n" style="width:90px">23<i>.</i>59</div><div class="c n" style="width:108px">0<i>.</i>00</div><div class="c n" style="width:108px">0<i>.</i>10</div><div class="c n" style="width:99px">2209<i>.</i>00</div><div class="c n" style="width:102px">0<i>.</i>54</div><div class="c n" style="width:102px">0<i>.</i>16</div><div class="c n" style="width:134px">0<i>.</i>27</div><div class="c n" style="width:134px">106<i>.</i>62</div><div class="c n" style="width:134px">12<i>.</i>32</div><div class="c n" style="width:134px">79<i>.</i>02</div></div>
<div class="r " style="height:17px"><div class="rh">20</div><div class="c" style="width:61px">2</div><div class="c" style="width:61px">2007</div><div class="c k" style="width:59px">海南省</div><div class="c k" style="width:59px">三亚</div><div class="c" style="width:64px">460200</div><div class="c n" style="width:96px">10<i>.</i>18</div><div class="c n" style="width:96px">2<i>.</i>66</div><div class="c n" style="width:90px">4<i>.</i>12</div><div class="c n" style="width:107px">11<i>.</i>82</div><div class="c n" style="width:90px">9<i>.</i>72</div><div class="c n" style="width:90px">44<i>.</i>75</div><div class="c n" style="width:108px">0<i>.</i>02</div><div class="c n" style="width:108px">0<i>.</i>17</div><div class="c n" style="width:99px">1099<i>.</i>00</div><div class="c n" style="width:102px">0<i>.</i>17</div><div class="c n" style="width:102px">0<i>.</i>18</div><div class="c n" style="width:134px">0<i>.</i>92</div><div class="c n" style="width:134px">459<i>.</i>53</div><div class="c n" style="width:134px">10<i>.</i>97</div><div class="c n" style="width:134px">72<i>.</i>34</div></div>
<div class="r " style="height:17px"><div class="rh">21</div><div class="c" style="width:61px">2</div><div class="c" style="width:61px">2008</div><div class="c k" style="width:59px">海南省</div><div class="c k" style="width:59px">三亚</div><div class="c" style="width:64px">460200</div><div class="c n" style="width:96px">10<i>.</i>33</div><div class="c n" style="width:96px">2<i>.</i>60</div><div class="c n" style="width:90px">4<i>.</i>08</div><div class="c n" style="width:107px">11<i>.</i>86</div><div class="c n" style="width:90px">12<i>.</i>05</div><div class="c n" style="width:90px">55<i>.</i>10</div><div class="c n" style="width:108px">0<i>.</i>02</div><div class="c n" style="width:108px">0<i>.</i>15</div><div class="c n" style="width:99px">1217<i>.</i>00</div><div class="c n" style="width:102px">0<i>.</i>17</div><div class="c n" style="width:102px">0<i>.</i>18</div><div class="c n" style="width:134px">1<i>.</i>07</div><div class="c n" style="width:134px">459<i>.</i>53</div><div class="c n" style="width:134px">8<i>.</i>21</div><div class="c n" style="width:134px">72<i>.</i>34</div></div>
<div class="r " style="height:17px"><div class="rh">22</div><div class="c" style="width:61px">2</div><div class="c" style="width:61px">2009</div><div class="c k" style="width:59px">海南省</div><div class="c k" style="width:59px">三亚</div><div class="c" style="width:64px">460200</div><div class="c n" style="width:96px">10<i>.</i>48</div><div class="c n" style="width:96px">2<i>.</i>71</div><div class="c n" style="width:90px">3<i>.</i>39</div><div class="c n" style="width:107px">11<i>.</i>99</div><div class="c n" style="width:90px">12<i>.</i>33</div><div class="c n" style="width:90px">65<i>.</i>33</div><div class="c n" style="width:108px">0<i>.</i>03</div><div class="c n" style="width:108px">0<i>.</i>15</div><div class="c n" style="width:99px">1303<i>.</i>00</div><div class="c n" style="width:102px">0<i>.</i>17</div><div class="c n" style="width:102px">0<i>.</i>18</div><div class="c n" style="width:134px">1<i>.</i>24</div><div class="c n" style="width:134px">464<i>.</i>75</div><div class="c n" style="width:134px">12<i>.</i>23</div><div class="c n" style="width:134px">72<i>.</i>34</div></div>
<div class="r " style="height:17px"><div class="rh">23</div><div class="c" style="width:61px">2</div><div class="c" style="width:61px">2010</div><div class="c k" style="width:59px">海南省</div><div class="c k" style="width:59px">三亚</div><div class="c" style="width:64px">460200</div><div class="c n" style="width:96px">10<i>.</i>75</div><div class="c n" style="width:96px">2<i>.</i>73</div><div class="c n" style="width:90px">3<i>.</i>35</div><div class="c n" style="width:107px">12<i>.</i>28</div><div class="c n" style="width:90px">13<i>.</i>28</div><div class="c n" style="width:90px">85<i>.</i>63</div><div class="c n" style="width:108px">0<i>.</i>03</div><div class="c n" style="width:108px">0<i>.</i>16</div><div class="c n" style="width:99px">1366<i>.</i>00</div><div class="c n" style="width:102px">0<i>.</i>17</div><div class="c n" style="width:102px">0<i>.</i>18</div><div class="c n" style="width:134px">1<i>.</i>35</div><div class="c n" style="width:134px">469<i>.</i>24</div><div class="c n" style="width:134px">13<i>.</i>45</div><div class="c n" style="width:134px">72<i>.</i>34</div></div>
<div class="r " style="height:17px"><div class="rh">24</div><div class="c" style="width:61px">2</div><div class="c" style="width:61px">2011</div><div class="c k" style="width:59px">海南省</div><div class="c k" style="width:59px">三亚</div><div class="c" style="width:64px">460200</div><div class="c n" style="width:96px">10<i>.</i>72</div><div class="c n" style="width:96px">2<i>.</i>70</div><div class="c n" style="width:90px">3<i>.</i>50</div><div class="c n" style="width:107px">12<i>.</i>49</div><div class="c n" style="width:90px">13<i>.</i>55</div><div class="c n" style="width:90px">94<i>.</i>50</div><div class="c n" style="width:108px">0<i>.</i>03</div><div class="c n" style="width:108px">0<i>.</i>14</div><div class="c n" style="width:99px">1589<i>.</i>00</div><div class="c n" style="width:102px">0<i>.</i>17</div><div class="c n" style="width:102px">0<i>.</i>17</div><div class="c n" style="width:134px">1<i>.</i>29</div><div class="c n" style="width:134px">474<i>.</i>45</div><div class="c n" style="width:134px">13<i>.</i>70</div><div class="c n" style="width:134px">72<i>.</i>34</div></div>
<div class="r " style="height:17px"><div class="rh">25</div><div class="c" style="width:61px">2</div><div class="c" style="width:61px">2012</div><div class="c k" style="width:59px">海南省</div><div class="c k" style="width:59px">三亚</div><div class="c" style="width:64px">460200</div><div class="c n" style="width:96px">10<i>.</i>74</div><div class="c n" style="width:96px">2<i>.</i>64</div><div class="c n" style="width:90px">3<i>.</i>46</div><div class="c n" style="width:107px">12<i>.</i>81</div><div class="c n" style="width:90px">2<i>.</i>44</div><div class="c n" style="width:90px">14<i>.</i>85</div><div class="c n" style="width:108px">0<i>.</i>03</div><div class="c n" style="width:108px">0<i>.</i>15</div><div class="c n" style="width:99px">1254<i>.</i>00</div><div class="c n" style="width:102px">0<i>.</i>17</div><div class="c n" style="width:102px">0<i>.</i>18</div><div class="c n" style="width:134px">1<i>.</i>30</div><div class="c n" style="width:134px">479<i>.</i>42</div><div class="c n" style="width:134px">13<i>.</i>90</div><div class="c n" style="width:134px">72<i>.</i>34</div></div>
<div class="r " style="height:17px"><div class="rh">26</div><div class="c" style="width:61px">2</div><div class="c" style="width:61px">2013</div><div class="c k" style="width:59px">海南省</div><div class="c k" style="width:59px">三亚</div><div class="c" style="width:64px">460200</div><div class="c n" style="width:96px">11<i>.</i>07</div><div class="c n" style="width:96px">2<i>.</i>52</div><div class="c n" style="width:90px">3<i>.</i>27</div><div class="c n" style="width:107px">13<i>.</i>06</div><div class="c n" style="width:90px">3<i>.</i>41</div><div class="c n" style="width:90px">22<i>.</i>15</div><div class="c n" style="width:108px">0<i>.</i>03</div><div class="c n" style="width:108px">0<i>.</i>16</div><div class="c n" style="width:99px">1526<i>.</i>00</div><div class="c n" style="width:102px">0<i>.</i>18</div><div class="c n" style="width:102px">0<i>.</i>21</div><div class="c n" style="width:134px">1<i>.</i>41</div><div class="c n" style="width:134px">484<i>.</i>63</div><div class="c n" style="width:134px">12<i>.</i>07</div><div class="c n" style="width:134px">72<i>.</i>34</div></div>
<div class="r " style="height:17px"><div class="rh">27</div><div class="c" style="width:61px">2</div><div class="c" style="width:61px">2014</div><div class="c k" style="width:59px">海南省</div><div class="c k" style="width:59px">三亚</div><div class="c" style="width:64px">460200</div><div class="c n" style="width:96px">10<i>.</i>91</div><div class="c n" style="width:96px">2<i>.</i>38</div><div class="c n" style="width:90px">2<i>.</i>44</div><div class="c n" style="width:107px">13<i>.</i>34</div><div class="c n" style="width:90px">3<i>.</i>90</div><div class="c n" style="width:90px">24<i>.</i>55</div><div class="c n" style="width:108px">0<i>.</i>03</div><div class="c n" style="width:108px">0<i>.</i>15</div><div class="c n" style="width:99px">1664<i>.</i>00</div><div class="c n" style="width:102px">0<i>.</i>19</div><div class="c n" style="width:102px">0<i>.</i>21</div><div class="c n" style="width:134px">1<i>.</i>58</div><div class="c n" style="width:134px">489<i>.</i>84</div><div class="c n" style="width:134px">11<i>.</i>35</div><div class="c n" style="width:134px">72<i>.</i>34</div></div>
<div class="r " style="height:17px"><div class="rh">28</div><div class="c" style="width:61px">2</div><div class="c" style="width:61px">2015</div><div class="c k" style="width:59px">海南省</div><div class="c k" style="width:59px">三亚</div><div class="c" style="width:64px">460200</div><div class="c n" style="width:96px">10<i>.</i>98</div><div class="c n" style="width:96px">2<i>.</i>35</div><div class="c n" style="width:90px">2<i>.</i>42</div><div class="c n" style="width:107px">13<i>.</i>51</div><div class="c n" style="width:90px">4<i>.</i>63</div><div class="c n" style="width:90px">29<i>.</i>10</div><div class="c n" style="width:108px">0<i>.</i>03</div><div class="c n" style="width:108px">0<i>.</i>16</div><div class="c n" style="width:99px">2576<i>.</i>00</div><div class="c n" style="width:102px">0<i>.</i>18</div><div class="c n" style="width:102px">0<i>.</i>22</div><div class="c n" style="width:134px">1<i>.</i>61</div><div class="c n" style="width:134px">494<i>.</i>53</div><div class="c n" style="width:134px">19<i>.</i>03</div><div class="c n" style="width:134px">72<i>.</i>34</div></div>
<div class="r " style="height:17px"><div class="rh">29</div><div class="c" style="width:61px">2</div><div class="c" style="width:61px">2016</div><div class="c k" style="width:59px">海南省</div><div class="c k" style="width:59px">三亚</div><div class="c" style="width:64px">460200</div><div class="c n" style="width:96px">11<i>.</i>06</div><div class="c n" style="width:96px">2<i>.</i>33</div><div class="c n" style="width:90px">2<i>.</i>40</div><div class="c n" style="width:107px">13<i>.</i>59</div><div class="c n" style="width:90px">5<i>.</i>06</div><div class="c n" style="width:90px">30<i>.</i>98</div><div class="c n" style="width:108px">0<i>.</i>03</div><div class="c n" style="width:108px">0<i>.</i>16</div><div class="c n" style="width:99px">2162<i>.</i>00</div><div class="c n" style="width:102px">0<i>.</i>19</div><div class="c n" style="width:102px">0<i>.</i>20</div><div class="c n" style="width:134px">1<i>.</i>63</div><div class="c n" style="width:134px">499<i>.</i>74</div><div class="c n" style="width:134px">14<i>.</i>26</div><div class="c n" style="width:134px">72<i>.</i>34</div></div>
<div class="r " style="height:17px"><div class="rh">30</div><div class="c" style="width:61px">2</div><div class="c" style="width:61px">2017</div><div class="c k" style="width:59px">海南省</div><div class="c k" style="width:59px">三亚</div><div class="c" style="width:64px">460200</div><div class="c n" style="width:96px">11<i>.</i>15</div><div class="c n" style="width:96px">2<i>.</i>31</div><div class="c n" style="width:90px">2<i>.</i>24</div><div class="c n" style="width:107px">13<i>.</i>78</div><div class="c n" style="width:90px">4<i>.</i>99</div><div class="c n" style="width:90px">34<i>.</i>62</div><div class="c n" style="width:108px">0<i>.</i>02</div><div class="c n" style="width:108px">0<i>.</i>15</div><div class="c n" style="width:99px">2219<i>.</i>00</div><div class="c n" style="width:102px">0<i>.</i>20</div><div class="c n" style="width:102px">0<i>.</i>22</div><div class="c n" style="width:134px">1<i>.</i>64</div><div class="c n" style="width:134px">510<i>.</i>15</div><div class="c n" style="width:134px">15<i>.</i>34</div><div class="c n" style="width:134px">72<i>.</i>34</div></div>
<div class="r " style="height:17px"><div class="rh">31</div><div class="c" style="width:61px">2</div><div class="c" style="width:61px">2018</div><div class="c k" style="width:59px">海南省</div><div class="c k" style="width:59px">三亚</div><div class="c" style="width:64px">460200</div><div class="c n" style="width:96px">11<i>.</i>26</div><div class="c n" style="width:96px">2<i>.</i>31</div><div class="c n" style="width:90px">2<i>.</i>21</div><div class="c n" style="width:107px">13<i>.</i>90</div><div class="c n" style="width:90px">5<i>.</i>29</div><div class="c n" style="width:90px">40<i>.</i>88</div><div class="c n" style="width:108px">0<i>.</i>02</div><div class="c n" style="width:108px">0<i>.</i>12</div><div class="c n" style="width:99px">2514<i>.</i>00</div><div class="c n" style="width:102px">0<i>.</i>27</div><div class="c n" style="width:102px">0<i>.</i>20</div><div class="c n" style="width:134px">1<i>.</i>58</div><div class="c n" style="width:134px">520<i>.</i>29</div><div class="c n" style="width:134px">13<i>.</i>59</div><div class="c n" style="width:134px">72<i>.</i>34</div></div>
<div class="r " style="height:17px"><div class="rh">32</div><div class="c" style="width:61px">2</div><div class="c" style="width:61px">2019</div><div class="c k" style="width:59px">海南省</div><div class="c k" style="width:59px">三亚</div><div class="c" style="width:64px">460200</div><div class="c n" style="width:96px">11<i>.</i>37</div><div class="c n" style="width:96px">2<i>.</i>31</div><div class="c n" style="width:90px">2<i>.</i>13</div><div class="c n" style="width:107px">13<i>.</i>97</div><div class="c n" style="width:90px">8<i>.</i>15</div><div class="c n" style="width:90px">69<i>.</i>10</div><div class="c n" style="width:108px">0<i>.</i>07</div><div class="c n" style="width:108px">0<i>.</i>10</div><div class="c n" style="width:99px">2708<i>.</i>00</div><div class="c n" style="width:102px">0<i>.</i>32</div><div class="c n" style="width:102px">0<i>.</i>19</div><div class="c n" style="width:134px">1<i>.</i>47</div><div class="c n" style="width:134px">530<i>.</i>70</div><div class="c n" style="width:134px">16<i>.</i>37</div><div class="c n" style="width:134px">72<i>.</i>34</div></div>
<div class="r " style="height:17px"><div class="rh">33</div><div class="c" style="width:61px">2</div><div class="c" style="width:61px">2020</div><div class="c k" style="width:59px">海南省</div><div class="c k" style="width:59px">三亚</div><div class="c" style="width:64px">460200</div><div class="c n" style="width:96px">11<i>.</i>14</div><div class="c n" style="width:96px">2<i>.</i>20</div><div class="c n" style="width:90px">1<i>.</i>87</div><div class="c n" style="width:107px">14<i>.</i>10</div><div class="c n" style="width:90px">8<i>.</i>48</div><div class="c n" style="width:90px">66<i>.</i>05</div><div class="c n" style="width:108px">0<i>.</i>08</div><div class="c n" style="width:108px">0<i>.</i>12</div><div class="c n" style="width:99px">3098<i>.</i>00</div><div class="c n" style="width:102px">0<i>.</i>35</div><div class="c n" style="width:102px">0<i>.</i>26</div><div class="c n" style="width:134px">1<i>.</i>57</div><div class="c n" style="width:134px">541<i>.</i>10</div><div class="c n" style="width:134px">17<i>.</i>49</div><div class="c n" style="width:134px">72<i>.</i>34</div></div>
<div class="r " style="height:17px"><div class="rh">34</div><div class="c" style="width:61px">2</div><div class="c" style="width:61px">2021</div><div class="c k" style="width:59px">海南省</div><div class="c k" style="width:59px">三亚</div><div class="c" style="width:64px">460200</div><div class="c n" style="width:96px">11<i>.</i>29</div><div class="c n" style="width:96px">2<i>.</i>17</div><div class="c n" style="width:90px">1<i>.</i>82</div><div class="c n" style="width:107px">14<i>.</i>22</div><div class="c n" style="width:90px">8<i>.</i>80</div><div class="c n" style="width:90px">69<i>.</i>45</div><div class="c n" style="width:108px">0<i>.</i>08</div><div class="c n" style="width:108px">0<i>.</i>12</div><div class="c n" style="width:99px">3194<i>.</i>00</div><div class="c n" style="width:102px">0<i>.</i>39</div><div class="c n" style="width:102px">0<i>.</i>29</div><div class="c n" style="width:134px">1<i>.</i>43</div><div class="c n" style="width:134px">551<i>.</i>51</div><div class="c n" style="width:134px">27<i>.</i>98</div><div class="c n" style="width:134px">72<i>.</i>34</div></div>
<div class="r " style="height:17px"><div class="rh">35</div><div class="c" style="width:61px">2</div><div class="c" style="width:61px">2022</div><div class="c k" style="width:59px">海南省</div><div class="c k" style="width:59px">三亚</div><div class="c" style="width:64px">460200</div><div class="c n" style="width:96px">11<i>.</i>29</div><div class="c n" style="width:96px">2<i>.</i>05</div><div class="c n" style="width:90px">1<i>.</i>77</div><div class="c n" style="width:107px">14<i>.</i>23</div><div class="c n" style="width:90px">10<i>.</i>41</div><div class="c n" style="width:90px">69<i>.</i>55</div><div class="c n" style="width:108px">0<i>.</i>08</div><div class="c n" style="width:108px">0<i>.</i>11</div><div class="c n" style="width:99px">3309<i>.</i>00</div><div class="c n" style="width:102px">0<i>.</i>41</div><div class="c n" style="width:102px">0<i>.</i>30</div><div class="c n" style="width:134px">1<i>.</i>41</div><div class="c n" style="width:134px">567<i>.</i>12</div><div class="c n" style="width:134px">22<i>.</i>39</div><div class="c n" style="width:134px">72<i>.</i>34</div></div>
<div class="r " style="height:17px"><div class="rh">36</div><div class="c" style="width:61px">2</div><div class="c" style="width:61px">2023</div><div class="c k" style="width:59px">海南省</div><div class="c k" style="width:59px">三亚</div><div class="c" style="width:64px">460200</div><div class="c n" style="width:96px">11<i>.</i>40</div><div class="c n" style="width:96px">2<i>.</i>03</div><div class="c n" style="width:90px">1<i>.</i>73</div><div class="c n" style="width:107px">14<i>.</i>30</div><div class="c n" style="width:90px">9<i>.</i>97</div><div class="c n" style="width:90px">68<i>.</i>60</div><div class="c n" style="width:108px">0<i>.</i>08</div><div class="c n" style="width:108px">0<i>.</i>12</div><div class="c n" style="width:99px">3471<i>.</i>00</div><div class="c n" style="width:102px">0<i>.</i>44</div><div class="c n" style="width:102px">0<i>.</i>31</div><div class="c n" style="width:134px">1<i>.</i>34</div><div class="c n" style="width:134px">577<i>.</i>53</div><div class="c n" style="width:134px">23<i>.</i>82</div><div class="c n" style="width:134px">72<i>.</i>34</div></div>
<div class="selbox"><i></i></div>
</div><div id="vs"><i class="up"></i><i class="th"></i><i class="dn"></i></div>
<div id="hs"><i class="lf"></i><i class="th"></i><i class="rt"></i></div>
<div id="mascot"><svg viewBox="0 0 41 41" width="41" height="41"><g fill="none" stroke="#1e1e1e" stroke-width="1.1" stroke-linecap="round" stroke-linejoin="round"><path d="M11.600 26.300C9.900 22.500 9.600 17 11.200 13.500 13 9.600 16.500 7.400 20.500 7.400 24.500 7.400 28 9.600 29.800 13.500 31.400 17 31.100 22.500 29.400 26.300"/><path d="M10.400 13.900a2.100 3 0 1 0-.2 5.800"/><path d="M30.600 13.900a2.100 3 0 1 1 .2 5.800"/><path d="M15.8 20.5q1.2 1.3 2.4.6 1.1-.9 2.3 0 1.200-.9 2.300 0 1.200.7 2.400-.6"/><path d="M11.600 26.200L9.500 35 M29.400 26.200l2.700 8.200"/><path d="M16.800 36l2.300-11.200 1.400-.9 1.300.9 6 11.200 M20.500 25.200v5 M22.200 26.300l-1 .8"/></g><circle cx="16.500" cy="15.700" r="1" fill="#1e1e1e"/><circle cx="25.400" cy="15.700" r="1" fill="#1e1e1e"/><ellipse cx="20.500" cy="17.400" rx="2" ry=".9" fill="#1e1e1e"/><path d="M12.300 26.600l3.600 2-1 3.400-2.200-1.800z M28.600 26.200l-3.400 2 1.800 2.400 2-1.600z M20.800 29.600l2.300 3-2.300 2.800-2-2.800z" fill="#2f7df6"/></svg></div>
<div id="tabs"><div class="tw">
<span style="width:153px">城乡融合发展原始数据</span><span class="on" style="width:165px">地级市城乡融合面板数据</span><span style="width:141px">城乡融合【熵值法】</span><span style="width:159px">城乡融合【熵权topsis】</span><span style="width:118px">中国城市数据库</span></div>
<b class="plus">+</b>
</div>
<div id="st">
<i class="sp" style="left:1663px;top:817px;height:14px"></i>
<svg class="ic" style="left:1671px;top:815px;width:18px;height:18px" viewBox="0 0 18 18"><path d="M9 13.6H1.8V1.6h10.4v6" fill="none" stroke="#3d4757" stroke-width="1.2"/><path d="M1.8 6.6h10.4" fill="none" stroke="#3d4757" stroke-width="1"/><path d="M3.6 4.1h2 M4.6 3.100v2 M7.800 4.100h2.200 M3.800 9l1.600 1.600 M5.400 9L3.800 10.600" stroke="#3d4757" stroke-width=".9"/><circle cx="12.6" cy="12.6" r="4.9" fill="#2fbf71"/><path d="M10.4 12.300l2 2 2.600-2.800" fill="none" stroke="#fff" stroke-width="1.400"/></svg>
<i class="sp" style="left:1696px;top:817px;height:14px"></i>
<svg class="ic" style="left:1704px;top:815px;width:18px;height:18px" viewBox="0 0 18 18"><circle cx="6.6" cy="6.6" r="5" fill="none" stroke="#3d4757" stroke-width="1.2"/><ellipse cx="6.6" cy="6.6" rx="2.3" ry="5" fill="none" stroke="#3d4757" stroke-width="1"/><path d="M1.6 6.6h10" stroke="#3d4757" stroke-width="1"/><circle cx="12.6" cy="12.6" r="4.9" fill="#2fbf71"/><path d="M10.4 12.300l2 2 2.600-2.800" fill="none" stroke="#fff" stroke-width="1.400"/></svg>
<svg class="ic" style="left:1735px;top:816px;width:15px;height:15px" viewBox="0 0 15 15"><path d="M5.400 1.400h4.200v4h4v4.200h-4v4H5.400v-4h-4V5.400h4z" fill="#c9ced8"/><path d="M1.4 1.4h12.2v12.2H1.4z M5.4 1.4v12.2 M9.6 1.4v12.2 M1.4 5.4h12.2 M1.4 9.6h12.2" fill="none" stroke="#3d4757" stroke-width="1.2"/><rect x="5.9" y="1" width="3.2" height="1" fill="#f2f4f8"/><rect x="5.9" y="13" width="3.2" height="1" fill="#f2f4f8"/><rect x="1" y="5.9" width="1" height="3.2" fill="#f2f4f8"/><rect x="13" y="5.9" width="1" height="3.2" fill="#f2f4f8"/></svg>
<i class="cr" style="left:1755px;top:823px"></i>
<i class="sp" style="left:1771px;top:817px;height:14px"></i>
<i class="mn" style="left:1787px;top:823px"></i>
<span class="zm">95%</span>
<i class="mn" style="left:1863px;top:823px"></i><i class="mn v" style="left:1867px;top:819px"></i>
<svg class="ic" style="left:1891px;top:819px;width:10px;height:10px" viewBox="0 0 10 10"><path d="M.9 4V.9H4 M9.100 6v3.100H6" fill="none" stroke="#3d4757" stroke-width="1.300"/></svg>
</div>

</body></html>
